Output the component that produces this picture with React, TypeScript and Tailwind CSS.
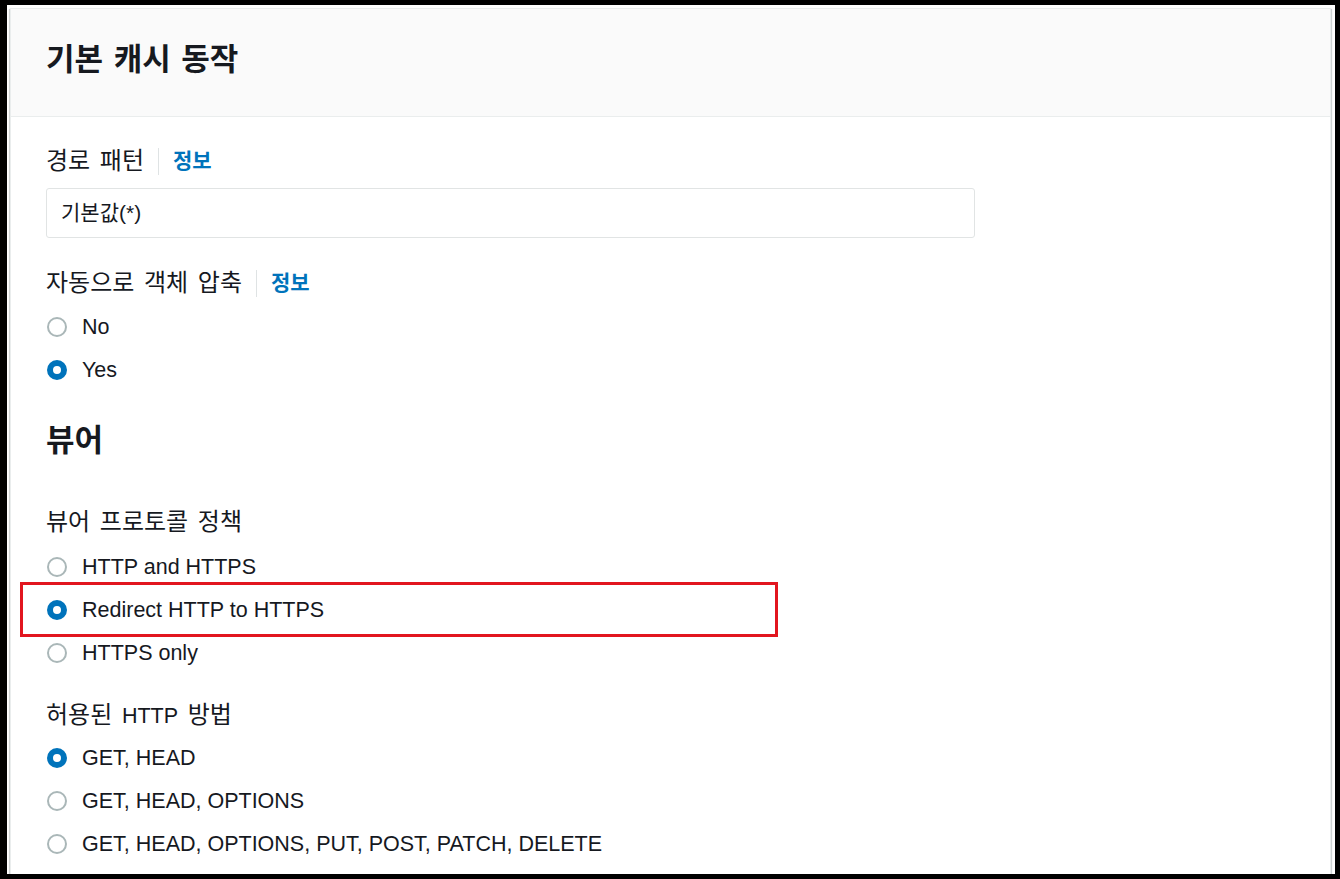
import React from 'react'

const font = {
  fontFamily: '"Liberation Sans", "Noto Sans CJK KR", sans-serif',
}

function Radio({ label, checked = false, marked = false }: { label: string; checked?: boolean; marked?: boolean }) {
  return (
    <div className="relative flex h-[43px] items-center">
      {checked ? (
        <span className="ml-px box-border h-5 w-5 shrink-0 rounded-full border-[6px] border-[#0073bb] bg-white" />
      ) : (
        <span className="ml-px box-border h-5 w-5 shrink-0 rounded-full border-2 border-[#aab7b8] bg-white" />
      )}
      <span className="ml-[15px] mt-[2px] text-[21.5px] text-[#16191f]">{label}</span>
      {/* 강조 표시 */}
      {marked && (
        <div className="pointer-events-none absolute -left-[26px] -top-[6px] h-[55px] w-[758px] border-[3px] border-[#e2161f]" />
      )}
    </div>
  )
}

function FieldLabel({ children, info = false }: { children: React.ReactNode; info?: boolean }) {
  return (
    <div className="flex h-[30px] items-center">
      <span className="text-[24px] leading-[30px] text-[#16191f] [word-spacing:3px]">{children}</span>
      {info && (
        <>
          <span className="ml-[14px] h-[27px] w-px bg-[#dfe3e4]" />
          <span className="ml-[14px] text-[21px] font-bold text-[#0073bb]">정보</span>
        </>
      )}
    </div>
  )
}

export default function App() {
  return (
    <div
      className="box-border h-[879px] w-[1340px] overflow-hidden border-b-[5px] border-l-[7px] border-r-[5px] border-t-[5px] border-black bg-white pl-[3px] pr-[4px] pt-[3px]"
      style={font}
    >
      <div className="box-border h-[880px] border border-[#eaeded] bg-white shadow-[0_1px_1px_0_rgba(0,28,36,0.3),1px_1px_1px_0_rgba(0,28,36,0.15),-1px_1px_1px_0_rgba(0,28,36,0.15)]">
        {/* 헤더 */}
        <div className="box-border h-[108px] border-b border-[#eaeded] bg-[#fafafa] pl-[35px] pt-[33px]">
          <h2 className="text-[31px] font-bold leading-[36px] text-[#16191f] [word-spacing:2px]">기본 캐시 동작</h2>
        </div>

        <div className="px-[35px] pt-[29px]">
          <FieldLabel info>경로 패턴</FieldLabel>
          <div className="mt-[12px] box-border flex h-[50px] w-[929px] items-center rounded-[3px] border border-[#e1e4e4] pl-[14px] text-[21px] text-[#16191f]">
            기본값(*)
          </div>

          <div className="mt-[30px]">
            <FieldLabel info>자동으로 객체 압축</FieldLabel>
          </div>
          <div className="mt-[7px]">
            <Radio label="No" />
            <Radio label="Yes" checked />
          </div>

          <h3 className="mt-[32px] text-[31px] font-bold leading-[36px] text-[#16191f]">뷰어</h3>

          <div className="mt-[48px]">
            <FieldLabel>뷰어 프로토콜 정책</FieldLabel>
          </div>
          <div className="mt-[8px]">
            <Radio label="HTTP and HTTPS" />
            <Radio label="Redirect HTTP to HTTPS" checked marked />
            <Radio label="HTTPS only" />
          </div>

          <div className="mt-[26px]">
            <FieldLabel>
              허용된 <span className="text-[21.5px]">HTTP</span> 방법
            </FieldLabel>
          </div>
          <div className="mt-[6px]">
            <Radio label="GET, HEAD" checked />
            <Radio label="GET, HEAD, OPTIONS" />
            <Radio label="GET, HEAD, OPTIONS, PUT, POST, PATCH, DELETE" />
          </div>
        </div>
      </div>
    </div>
  )
}
